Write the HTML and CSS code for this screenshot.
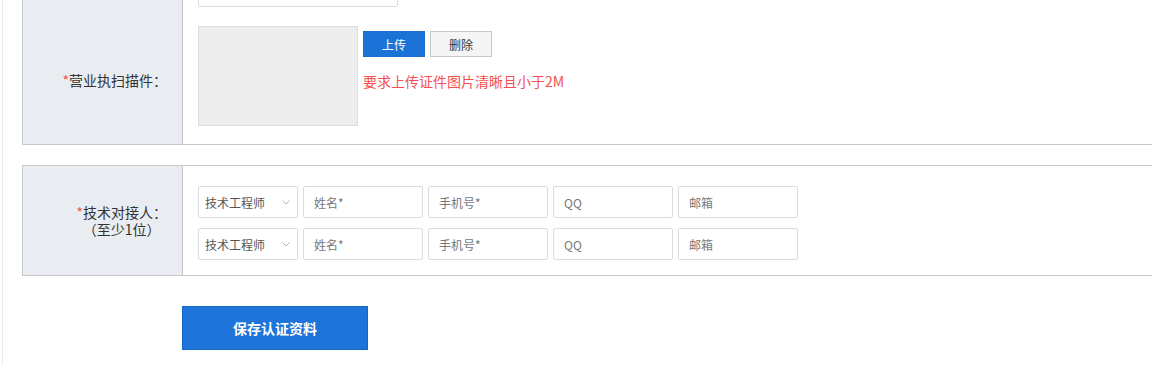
FILE: index.html
```html
<!DOCTYPE html>
<html lang="zh-CN">
<head>
    <meta charset="UTF-8">
    <meta content="width=device-width, initial-scale=1.0" name="viewport">
    <title>认证资料</title>
    <link rel="stylesheet" href="styles.css">
</head>
<body>
<div class="page">
    <div class="form">
        <div class="section">
            <div class="row">
                <div class="row-label"></div>
                <div class="row-body row-body-first">
                    <input class="text-input wide" type="text">
                </div>
            </div>
            <div class="row">
                <div class="row-label"><span><em>*</em>营业执扫描件：</span></div>
                <div class="row-body row-body-upload">
                    <div class="upload">
                        <div class="preview"></div>
                        <div class="upload-side">
                            <div class="upload-buttons">
                                <button class="btn btn-primary">上传</button>
                                <button class="btn btn-default">删除</button>
                            </div>
                            <div class="upload-tip">要求上传证件图片清晰且小于2M</div>
                        </div>
                    </div>
                </div>
            </div>
        </div>

        <div class="section">
            <div class="row">
                <div class="row-label">
                    <div class="label-stack">
                        <div><em>*</em>技术对接人：</div>
                        <div>（至少1位）</div>
                    </div>
                </div>
                <div class="row-body row-body-contacts">
                    <div class="contact">
                        <div class="select-wrap">
                            <select class="select">
                                <option>技术工程师</option>
                            </select>
                            <svg class="chevron" width="8" height="5" viewBox="0 0 8 5"><path d="M0.5 0.5 L4 4 L7.5 0.5" fill="none" stroke="#b5b5b5" stroke-width="1"/></svg>
                        </div>
                        <input class="text-input" type="text" placeholder="姓名*">
                        <input class="text-input" type="text" placeholder="手机号*">
                        <input class="text-input" type="text" placeholder="QQ">
                        <input class="text-input" type="text" placeholder="邮箱">
                    </div>
                    <div class="contact">
                        <div class="select-wrap">
                            <select class="select">
                                <option>技术工程师</option>
                            </select>
                            <svg class="chevron" width="8" height="5" viewBox="0 0 8 5"><path d="M0.5 0.5 L4 4 L7.5 0.5" fill="none" stroke="#b5b5b5" stroke-width="1"/></svg>
                        </div>
                        <input class="text-input" type="text" placeholder="姓名*">
                        <input class="text-input" type="text" placeholder="手机号*">
                        <input class="text-input" type="text" placeholder="QQ">
                        <input class="text-input" type="text" placeholder="邮箱">
                    </div>
                </div>
            </div>
        </div>

        <div class="actions">
            <button class="btn-save">保存认证资料</button>
        </div>
    </div>
</div>
</body>
</html>
```

FILE: styles.css
```css
* {
    box-sizing: border-box;
    margin: 0;
    padding: 0;
}

html, body {
    overflow: hidden;
}

body {
    font-family: "Microsoft YaHei", "Noto Sans CJK SC", "Liberation Sans", sans-serif;
    font-size: 12px;
    color: #333;
    background-color: white;
}

.page {
    display: flow-root;
    margin-left: 2px;
    border-left: 1px solid #ebebeb;
    padding-left: 19px;
    min-height: 100vh;
}

/* scrolled: the row above is partly out of view */
.form {
    margin-top: -36px;
    width: 1200px;
}

.section {
    border: 1px solid #c8c8c8;
    border-right: none;
    margin-bottom: 20px;
}

.row {
    display: flex;
}

.row-label {
    width: 160px;
    flex-shrink: 0;
    background-color: #e9ecf1;
    border-right: 1px solid #c8c8c8;
    display: flex;
    align-items: center;
    justify-content: flex-end;
    padding-right: 15px;
    font-size: 14px;
    color: #333;
}

.row-label em {
    font-style: normal;
    color: #f5593d;
}

.label-stack {
    text-align: center;
    line-height: 17px;
}

.row-body {
    flex: 1;
    padding: 0 15px;
}

.row-body-first {
    padding-top: 10px;
    padding-bottom: 9px;
}

.row-body-upload {
    padding-top: 10px;
    padding-bottom: 18px;
}

.row-body-contacts {
    padding-top: 20px;
    padding-bottom: 15px;
    display: flex;
    flex-direction: column;
    gap: 10px;
}

.text-input {
    width: 120px;
    height: 32px;
    border: 1px solid #dcdcdc;
    border-radius: 2px;
    padding: 0 10px;
    font-family: inherit;
    font-size: 12px;
    color: #555;
    background-color: white;
    outline: none;
}

.text-input::placeholder {
    color: #777;
}

.text-input.wide {
    width: 200px;
}

.upload {
    display: flex;
    gap: 5px;
}

.preview {
    width: 160px;
    height: 100px;
    background-color: #ededed;
    border: 1px solid #dedede;
}

.upload-side {
    padding-top: 5px;
}

.upload-buttons {
    display: flex;
    gap: 5px;
}

.btn {
    width: 62px;
    height: 26px;
    font-family: inherit;
    font-size: 12px;
    cursor: pointer;
}

.btn-primary {
    background-color: #1c73d7;
    border: 1px solid #1c6cc9;
    color: white;
}

.btn-default {
    background-color: #f5f5f5;
    border: 1px solid #c8c8c8;
    color: #333;
}

.upload-tip {
    margin-top: 14px;
    font-size: 14px;
    line-height: 20px;
    color: #f5504f;
}

.contact {
    display: flex;
    gap: 5px;
}

.select-wrap {
    position: relative;
    width: 100px;
    height: 32px;
}

.select {
    appearance: none;
    width: 100%;
    height: 100%;
    border: 1px solid #dcdcdc;
    border-radius: 2px;
    padding: 0 6px;
    font-family: inherit;
    font-size: 12px;
    color: #555;
    background-color: white;
    outline: none;
}

.chevron {
    position: absolute;
    right: 8px;
    top: 14px;
    pointer-events: none;
}

.actions {
    padding: 10px 0 0 160px;
}

.btn-save {
    width: 186px;
    height: 44px;
    background-color: #1e74d8;
    border: 1px solid #1566c4;
    color: white;
    font-family: inherit;
    font-size: 14px;
    font-weight: bold;
    cursor: pointer;
}
```
